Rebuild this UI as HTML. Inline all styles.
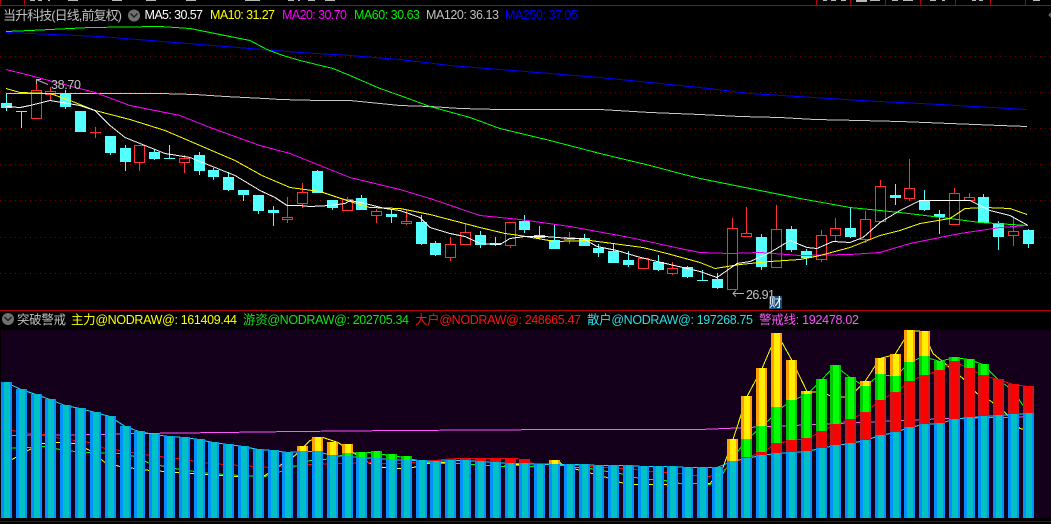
<!DOCTYPE html>
<html lang="zh">
<head>
<meta charset="utf-8">
<title>当升科技</title>
<style>
html,body{margin:0;padding:0;background:#000;width:1051px;height:524px;overflow:hidden}
svg{display:block}
text{font-family:"Liberation Sans","WenQuanYi Zen Hei","Noto Sans CJK SC",sans-serif;font-size:12.5px}
polyline{fill:none;stroke-width:1;shape-rendering:crispEdges}
</style>
</head>
<body>
<svg width="1051" height="524" viewBox="0 0 1051 524" xmlns="http://www.w3.org/2000/svg">
<defs>
<linearGradient id="b"><stop offset=".2727" stop-color="#0090ff"/><stop offset=".2727" stop-color="#00c0c4"/><stop offset=".8182" stop-color="#00c0c4"/><stop offset=".8182" stop-color="#0090ff"/></linearGradient>
<linearGradient id="r"><stop offset=".2727" stop-color="#cc1818"/><stop offset=".2727" stop-color="#ff0000"/><stop offset=".8182" stop-color="#ff0000"/><stop offset=".8182" stop-color="#cc1818"/></linearGradient>
<linearGradient id="g"><stop offset=".2727" stop-color="#00c800"/><stop offset=".2727" stop-color="#00ff00"/><stop offset=".8182" stop-color="#00ff00"/><stop offset=".8182" stop-color="#00c800"/></linearGradient>
<linearGradient id="y"><stop offset=".2727" stop-color="#ffa000"/><stop offset=".2727" stop-color="#ffee00"/><stop offset=".8182" stop-color="#ffee00"/><stop offset=".8182" stop-color="#ffa000"/></linearGradient>
</defs>
<rect width="1051" height="524" fill="#000"/>

<!-- top strip fragments -->
<g fill="#b8b8b8" shape-rendering="crispEdges">
<rect x="30" y="0" width="5" height="1"/><rect x="38" y="0" width="4" height="1"/><rect x="48" y="0" width="2" height="1"/><rect x="68" y="0" width="10" height="1"/><rect x="112" y="0" width="10" height="1"/><rect x="146" y="0" width="10" height="1"/><rect x="186" y="0" width="10" height="1"/><rect x="245" y="0" width="15" height="1"/><rect x="288" y="0" width="6" height="1"/><rect x="298" y="0" width="2" height="1"/><rect x="308" y="0" width="7" height="1"/><rect x="325" y="0" width="10" height="1"/>
<rect x="823" y="0" width="4" height="1"/><rect x="831" y="0" width="5" height="1"/><rect x="841" y="0" width="5" height="1"/><rect x="856" y="0" width="11" height="1"/><rect x="856" y="1" width="11" height="1"/><rect x="870" y="0" width="10" height="1"/><rect x="892" y="0" width="6" height="1"/><rect x="903" y="0" width="10" height="1"/><rect x="930" y="0" width="6" height="1"/><rect x="942" y="0" width="3" height="1"/><rect x="972" y="0" width="4" height="1"/><rect x="979" y="0" width="4" height="1"/><rect x="1033" y="0" width="7" height="1"/>
</g>
<g fill="#b40000" shape-rendering="crispEdges">
<rect x="0" y="5" width="1051" height="1"/>
<rect x="0" y="0" width="1" height="5"/><rect x="24" y="0" width="1" height="5"/>
<rect x="816" y="0" width="1" height="5"/><rect x="850" y="0" width="1" height="5"/><rect x="885" y="0" width="1" height="5"/><rect x="920" y="0" width="1" height="5"/><rect x="955" y="0" width="1" height="5"/><rect x="990" y="0" width="1" height="5"/><rect x="1025" y="0" width="1" height="5"/>
<rect x="0" y="310" width="1051" height="1"/>
</g>

<!-- dotted grid -->
<g stroke="#800000" stroke-width="1" stroke-dasharray="1 4" shape-rendering="crispEdges">
<path d="M0 56.5H1051M0 92.5H1051M0 128.5H1051M0 164.5H1051M0 200.5H1051M0 237.5H1051M0 273.5H1051"/>
</g>

<!-- header text -->
<text x="3" y="20" textLength="119" style="font-size:13px" fill="#c0c0c0">当升科技(日线,前复权)</text>
<circle cx="134" cy="15.5" r="6" fill="#707070"/><polyline points="130.5,13.5 134,17 137.5,13.5" stroke="#202020" style="stroke-width:1.5;shape-rendering:auto"/>
<text x="144.5" y="19" textLength="58.5" fill="#ffffff">MA5: 30.57</text>
<text x="210" y="19" textLength="65" fill="#ffff00">MA10: 31.27</text>
<text x="282" y="19" textLength="65" fill="#ff00ff">MA20: 30.70</text>
<text x="354" y="19" textLength="66" fill="#00f000">MA60: 30.63</text>
<text x="426" y="19" textLength="73" fill="#c0c0c0">MA120: 36.13</text>
<text x="505" y="19" textLength="73" fill="#0000f0">MA250: 37.05</text>
<path d="M1049 15l2-2v4z" fill="none" stroke="#707070"/>

<!-- candles: cyan -->
<path fill="#54ffff" shape-rendering="crispEdges" d="M1 103h11v5h-11zM6 93h1v18h-1zM16 111h11v1h-11zM21 111h1v17h-1zM60 93h11v14h-11zM65 90h1v19h-1zM75 111h11v21h-11zM105 136h11v17h-11zM110 136h1v19h-1zM120 148h11v14h-11zM125 145h1v26h-1zM149 152h11v7h-11zM154 149h1v11h-1zM164 158h11v1h-11zM169 145h1v14h-1zM194 155h11v16h-11zM199 152h1v23h-1zM208 170h11v7h-11zM213 168h1v12h-1zM223 177h11v13h-11zM228 172h1v19h-1zM238 190h11v5h-11zM243 190h1v11h-1zM253 195h11v16h-11zM258 195h1v19h-1zM268 210h11v3h-11zM273 206h1v20h-1zM312 171h11v22h-11zM317 170h1v2h-1zM327 200h11v8h-11zM332 200h1v10h-1zM356 198h11v12h-11zM361 195h1v4h-1zM386 214h11v3h-11zM391 209h1v14h-1zM416 222h11v22h-11zM421 215h1v30h-1zM430 243h11v12h-11zM435 241h1v15h-1zM475 235h11v10h-11zM480 231h1v17h-1zM490 243h11v2h-11zM495 237h1v9h-1zM519 221h11v9h-11zM524 215h1v18h-1zM534 235h11v3h-11zM539 226h1v13h-1zM549 240h11v9h-11zM554 225h1v24h-1zM579 238h11v8h-11zM584 234h1v12h-1zM593 248h11v5h-11zM598 244h1v13h-1zM608 251h11v12h-11zM613 243h1v20h-1zM623 260h11v5h-11zM628 251h1v16h-1zM653 262h11v8h-11zM658 255h1v16h-1zM682 267h11v10h-11zM687 266h1v12h-1zM697 280h11v1h-11zM702 270h1v11h-1zM712 279h11v9h-11zM717 273h1v16h-1zM756 237h11v30h-11zM761 234h1v36h-1zM786 229h11v21h-11zM791 226h1v26h-1zM801 251h11v7h-11zM806 249h1v16h-1zM845 228h11v9h-11zM850 207h1v31h-1zM890 195h11v3h-11zM895 184h1v21h-1zM919 200h11v10h-11zM924 190h1v21h-1zM934 214h11v3h-11zM939 210h1v24h-1zM978 197h11v26h-11zM983 194h1v29h-1zM993 223h11v14h-11zM998 221h1v29h-1zM1023 230h11v14h-11zM1028 229h1v19h-1z"/>
<!-- candles: red -->
<path fill="#000" stroke="#ff3232" stroke-width="1" shape-rendering="crispEdges" d="M31.5 90.5h10v28h-10zM36.5 82v8M45.5 91.5h10v3h-10zM50.5 87v4M50.5 95v5M90 132.5h11M95.5 127v11M134.5 145.5h10v17h-10zM139.5 163v8M179.5 158.5h10v4h-10zM184.5 155v3M184.5 163v10M282.5 217.5h10v2h-10zM287.5 197v20M287.5 220v3M297.5 192.5h10v11h-10zM302.5 183v9M302.5 204v4M342.5 199.5h10v11h-10zM347.5 197v2M371.5 211.5h10v4h-10zM376.5 209v2M376.5 216v7M401.5 221.5h10v2h-10zM406.5 210v11M406.5 224v1M445.5 244.5h10v13h-10zM450.5 237v7M450.5 258v3M460.5 232.5h10v12h-10zM465.5 224v8M505.5 222.5h10v23h-10zM510.5 246v2M564.5 237.5h10v2h-10zM569.5 232v5M569.5 240v4M638.5 258.5h10v10h-10zM667.5 268.5h10v5h-10zM672.5 262v6M672.5 274v1M727.5 228.5h10v61h-10zM732.5 218v10M741.5 233.5h10v3h-10zM746.5 207v26M771.5 229.5h10v38h-10zM776.5 205v24M816.5 235.5h10v24h-10zM821.5 230v5M821.5 260v2M830.5 228.5h10v7h-10zM835.5 218v10M835.5 236v5M860.5 219.5h10v20h-10zM865.5 211v8M865.5 240v3M875.5 186.5h10v35h-10zM880.5 180v6M904.5 188.5h10v10h-10zM909.5 159v29M909.5 199v2M949.5 193.5h10v31h-10zM954.5 188v5M964.5 197.5h10v3h-10zM969.5 193v4M1008.5 231.5h10v4h-10zM1013.5 217v14M1013.5 236v10"/>

<!-- moving averages -->
<polyline stroke="#0000ff" points="6,32.5 30,33.5 100,36.5 150,40.5 200,44.5 250,48.5 300,52.5 350,55.5 400,59.5 450,65.5 500,69.5 550,73.5 600,77.5 650,82.5 700,87.5 750,93.5 830,98.5 860,100.5 940,104.5 1027,109.5"/>
<polyline stroke="#c8c8c8" points="6,93.5 160,93.5 195,94.5 225,96.5 265,98.5 280,99.5 320,100.5 350,100.5 400,105.5 430,106.5 460,108.5 500,109.5 600,109.5 650,112.5 700,114.5 740,116.5 780,117.5 815,119.5 860,120.5 900,121.5 950,123.5 1000,125.5 1027,126.5"/>
<polyline stroke="#00ff00" points="6,31.5 30,30.5 90,27.5 160,26.5 190,28.5 210,32.5 250,40.5 267,49.5 283,55.5 300,60.5 333,68.5 350,75.5 380,88.5 400,95.5 430,106.5 470,117.5 500,128.5 550,140.5 600,153.5 650,165.5 684,174.5 700,178.5 750,188.5 800,198.5 850,207.5 900,212.5 950,218.5 980,222.5 1027,225.5"/>
<polyline stroke="#ff00ff" points="6,69.5 30,75.5 60,83.5 95,92.5 130,105.5 180,115.5 210,127.5 260,145.5 290,153.5 320,165.5 350,177.5 400,189.5 430,198.5 480,215.5 520,219.5 570,226.5 630,237.5 680,248.5 700,252.5 730,253.5 760,252.5 800,255.5 850,254.5 880,252.5 910,243.5 960,233.5 1000,227.5 1027,225.5"/>
<polyline stroke="#ffff00" points="6,88.5 20,92.5 50,93.5 70,100.5 95,110.5 130,119.5 165,130.5 200,145.5 235,160.5 262,175.5 290,187.5 320,191.5 350,201.5 370,207.5 400,208.5 430,214.5 480,227.5 505,233.5 520,235.5 555,241.5 590,240.5 613,243.5 643,247.5 667,253.5 700,262.5 715,268.5 740,264.5 770,261.5 800,259.5 820,255.5 850,247.5 880,235.5 900,230.5 920,223.5 950,218.5 965,208.5 985,207.5 1010,208.5 1027,214.5"/>
<polyline stroke="#ffffff" points="6,106.5 20,107.5 30,105.5 50,100.5 80,105.5 95,110.5 110,125.5 125,137.5 145,145.5 165,153.5 190,157.5 205,163.5 235,175.5 240,178.5 260,190.5 275,197.5 287,205.5 300,205.5 310,206.5 330,205.5 345,203.5 350,200.5 365,203.5 385,208.5 400,210.5 420,217.5 430,227.5 450,233.5 465,236.5 480,243.5 500,244.5 510,238.5 525,236.5 545,236.5 570,238.5 583,238.5 597,246.5 617,250.5 637,256.5 657,261.5 683,267.5 700,271.5 717,277.5 737,263.5 750,261.5 770,252.5 790,240.5 807,247.5 817,248.5 833,241.5 850,242.5 863,237.5 880,222.5 900,210.5 910,205.5 920,200.5 970,200.5 990,210.5 1010,215.5 1028,225.5"/>

<!-- high/low annotations -->
<path d="M36.5 84V79.5H41M37 80L48 84.5" fill="none" stroke="#b0b0b0" stroke-width="1"/>
<text x="51" y="89" textLength="30" fill="#c0c0c0">38.70</text>
<path d="M744 293.5H733M736 290.5L733 293.5L736 296.5" fill="none" stroke="#b0b0b0" stroke-width="1"/>
<text x="746" y="299" textLength="29" fill="#c0c0c0">26.91</text>
<rect x="769" y="296" width="13" height="13" fill="#0f4c78"/>
<text x="769" y="307" style="font-size:13px" fill="#ffffff">财</text>

<!-- indicator header -->
<circle cx="8" cy="319" r="6" fill="#707070"/><polyline points="4.5,317 8,320.5 11.5,317" stroke="#202020" style="stroke-width:1.5;shape-rendering:auto"/>
<text x="17" y="324" textLength="49" style="font-size:12.5px" fill="#c0c0c0">突破警戒</text>
<text x="71" y="324" textLength="166" fill="#ffff00">主力@NODRAW@: 161409.44</text>
<text x="243" y="324" textLength="166" fill="#14e614">游资@NODRAW@: 202705.34</text>
<text x="415" y="324" textLength="166" fill="#ff1414">大户@NODRAW@: 248665.47</text>
<text x="587" y="324" textLength="166" fill="#28e0e8">散户@NODRAW@: 197268.75</text>
<text x="759" y="324" textLength="100" fill="#ff54ff">警戒线: 192478.02</text>

<!-- indicator panel -->
<rect x="1" y="330" width="1050" height="188" fill="#15001c"/>
<polyline stroke="#ff54ff" points="1,435.5 100,434.5 140,433.5 221,432.5 295,431.5 399,430.5 562,429.5 700,429.5 725,428.5 770,426.5 816,424.5 860,422.5 900,420.5 950,418.5 1000,417.5 1030,416.5"/>
<polyline stroke="#ffff00" points="6,470.5 12,459.5 28,450.5 40,443.5 60,442.5 75,443.5 90,450.5 105,462.5 120,466.5 135,468.5 150,470.5 165,471.5 190,473.5 210,474.5 235,476.5 265,475.5 280,465.5 295,455.5 310,440.5 323,437.5 338,442.5 350,450.5 368,462.5 383,467.5 398,468.5 413,467.5 428,463.5 443,462.5 502,466.5 517,464.5 532,466.5 547,463.5 560,462.5 563,465.5 577,469.5 592,473.5 607,477.5 620,482.5 635,484.5 665,484.5 680,483.5 710,483.5 723,467.5 733,439.5 747,396.5 762,368.5 777,333.5 792,360.5 807,391.5 822,392.5 835,397.5 850,396.5 865,381.5 880,358.5 895,354.5 910,330.5 923,331.5 933,353.5 963,378.5 977,393.5 990,400.5 1005,412.5 1020,428.5 1028,430.5"/>
<polyline stroke="#00ff00" points="6,448.5 30,447.5 45,446.5 60,449.5 75,451.5 90,452.5 120,453.5 135,456.5 150,463.5 165,466.5 180,469.5 195,471.5 210,473.5 240,475.5 265,476.5 290,468.5 310,460.5 325,459.5 350,453.5 369,452.5 383,454.5 398,456.5 413,459.5 428,462.5 443,463.5 458,463.5 473,464.5 487,465.5 502,466.5 517,465.5 532,466.5 547,463.5 562,465.5 577,467.5 590,468.5 607,471.5 620,473.5 635,477.5 650,479.5 665,480.5 680,483.5 695,483.5 710,484.5 723,473.5 733,457.5 747,439.5 762,426.5 782,407.5 792,400.5 807,394.5 822,379.5 835,365.5 850,377.5 865,386.5 880,374.5 895,376.5 910,362.5 923,356.5 940,361.5 954,357.5 969,359.5 983,364.5 998,379.5 1013,390.5 1023,405.5"/>
<polyline stroke="#ff0000" points="12,430.5 30,433.5 45,434.5 60,438.5 90,442.5 105,448.5 120,450.5 150,455.5 170,457.5 190,460.5 210,463.5 240,465.5 270,467.5 295,465.5 310,464.5 340,463.5 350,463.5 367,462.5 383,463.5 398,463.5 413,462.5 428,461.5 443,459.5 458,458.5 517,458.5 533,463.5 547,463.5 562,464.5 577,465.5 590,466.5 607,467.5 620,468.5 635,469.5 650,471.5 665,472.5 680,473.5 695,475.5 710,476.5 723,470.5 733,462.5 747,457.5 762,452.5 777,443.5 792,440.5 807,438.5 822,431.5 835,424.5 850,419.5 865,412.5 880,400.5 895,392.5 910,381.5 923,375.5 940,370.5 954,361.5 969,368.5 983,375.5 998,379.5 1013,384.5 1028,386.5"/>
<polyline stroke="#14dcf0" points="6,382.5 21,389.5 36,394.5 50,399.5 65,405.5 80,408.5 95,412.5 110,416.5 125,426.5 139,431.5 154,434.5 169,436.5 184,437.5 199,439.5 213,442.5 228,444.5 243,446.5 258,449.5 273,450.5 287,452.5 302,451.5 317,451.5 332,455.5 347,456.5 361,457.5 376,458.5 391,459.5 406,460.5 421,460.5 435,461.5 450,460.5 465,460.5 480,461.5 495,462.5 510,463.5 524,463.5 539,464.5 554,464.5 569,464.5 584,464.5 598,465.5 613,465.5 628,465.5 643,466.5 658,466.5 672,466.5 687,467.5 702,467.5 717,467.5 732,461.5 746,458.5 761,455.5 776,453.5 791,452.5 806,451.5 821,448.5 835,445.5 850,443.5 865,440.5 880,435.5 895,432.5 909,427.5 924,424.5 939,423.5 954,419.5 969,417.5 983,416.5 998,415.5 1013,414.5 1028,413.5"/>

<!-- stacked bars: yellow -->
<g fill="url(#y)" shape-rendering="crispEdges">
<rect x="297" y="446" width="11" height="72"/><rect x="312" y="437" width="11" height="81"/><rect x="327" y="442" width="11" height="76"/><rect x="342" y="444" width="11" height="74"/><rect x="549" y="460" width="11" height="58"/>
<rect x="727" y="439" width="11" height="79"/><rect x="741" y="396" width="11" height="122"/><rect x="756" y="368" width="11" height="150"/><rect x="771" y="333" width="11" height="185"/><rect x="786" y="360" width="11" height="158"/><rect x="801" y="391" width="11" height="127"/><rect x="860" y="381" width="11" height="137"/><rect x="875" y="358" width="11" height="160"/><rect x="890" y="354" width="11" height="164"/><rect x="904" y="330" width="11" height="188"/><rect x="919" y="331" width="11" height="187"/>
</g>
<!-- green -->
<g fill="url(#g)" shape-rendering="crispEdges">
<rect x="342" y="453" width="11" height="65"/><rect x="356" y="452" width="11" height="66"/><rect x="371" y="451" width="11" height="67"/><rect x="386" y="454" width="11" height="64"/><rect x="401" y="456" width="11" height="62"/>
<rect x="741" y="439" width="11" height="79"/><rect x="756" y="426" width="11" height="92"/><rect x="771" y="407" width="11" height="111"/><rect x="786" y="400" width="11" height="118"/><rect x="801" y="394" width="11" height="124"/><rect x="816" y="379" width="11" height="139"/><rect x="830" y="365" width="11" height="153"/><rect x="845" y="377" width="11" height="141"/><rect x="860" y="386" width="11" height="132"/><rect x="875" y="374" width="11" height="144"/><rect x="890" y="376" width="11" height="142"/><rect x="904" y="362" width="11" height="156"/><rect x="919" y="356" width="11" height="162"/><rect x="934" y="361" width="11" height="157"/><rect x="949" y="357" width="11" height="161"/><rect x="964" y="359" width="11" height="159"/><rect x="978" y="364" width="11" height="154"/>
</g>
<!-- red -->
<g fill="url(#r)" shape-rendering="crispEdges">
<rect x="430" y="460" width="11" height="58"/><rect x="445" y="459" width="11" height="59"/><rect x="460" y="458" width="11" height="60"/><rect x="475" y="458" width="11" height="60"/><rect x="490" y="458" width="11" height="60"/><rect x="505" y="458" width="11" height="60"/><rect x="519" y="459" width="11" height="59"/><rect x="534" y="463" width="11" height="55"/>
<rect x="741" y="457" width="11" height="61"/><rect x="756" y="452" width="11" height="66"/><rect x="771" y="443" width="11" height="75"/><rect x="786" y="440" width="11" height="78"/><rect x="801" y="438" width="11" height="80"/><rect x="816" y="431" width="11" height="87"/><rect x="830" y="424" width="11" height="94"/><rect x="845" y="419" width="11" height="99"/><rect x="860" y="412" width="11" height="106"/><rect x="875" y="400" width="11" height="118"/><rect x="890" y="392" width="11" height="126"/><rect x="904" y="381" width="11" height="137"/><rect x="919" y="375" width="11" height="143"/><rect x="934" y="370" width="11" height="148"/><rect x="949" y="361" width="11" height="157"/><rect x="964" y="368" width="11" height="150"/><rect x="978" y="375" width="11" height="143"/><rect x="993" y="379" width="11" height="139"/><rect x="1008" y="384" width="11" height="134"/><rect x="1023" y="386" width="11" height="132"/>
</g>
<!-- blue -->
<g fill="url(#b)" shape-rendering="crispEdges">
<rect x="1" y="382" width="11" height="136"/><rect x="16" y="389" width="11" height="129"/><rect x="31" y="394" width="11" height="124"/><rect x="45" y="399" width="11" height="119"/><rect x="60" y="405" width="11" height="113"/><rect x="75" y="408" width="11" height="110"/><rect x="90" y="412" width="11" height="106"/><rect x="105" y="416" width="11" height="102"/><rect x="120" y="426" width="11" height="92"/><rect x="134" y="431" width="11" height="87"/><rect x="149" y="434" width="11" height="84"/><rect x="164" y="436" width="11" height="82"/><rect x="179" y="437" width="11" height="81"/><rect x="194" y="439" width="11" height="79"/><rect x="208" y="442" width="11" height="76"/><rect x="223" y="444" width="11" height="74"/><rect x="238" y="446" width="11" height="72"/><rect x="253" y="449" width="11" height="69"/><rect x="268" y="450" width="11" height="68"/><rect x="282" y="452" width="11" height="66"/><rect x="297" y="451" width="11" height="67"/><rect x="312" y="451" width="11" height="67"/><rect x="327" y="455" width="11" height="63"/><rect x="342" y="456" width="11" height="62"/><rect x="356" y="457" width="11" height="61"/><rect x="371" y="458" width="11" height="60"/><rect x="386" y="459" width="11" height="59"/><rect x="401" y="460" width="11" height="58"/><rect x="416" y="460" width="11" height="58"/><rect x="430" y="461" width="11" height="57"/><rect x="445" y="460" width="11" height="58"/><rect x="460" y="460" width="11" height="58"/><rect x="475" y="461" width="11" height="57"/><rect x="490" y="462" width="11" height="56"/><rect x="505" y="463" width="11" height="55"/><rect x="519" y="463" width="11" height="55"/><rect x="534" y="464" width="11" height="54"/><rect x="549" y="464" width="11" height="54"/><rect x="564" y="464" width="11" height="54"/><rect x="579" y="464" width="11" height="54"/><rect x="593" y="465" width="11" height="53"/><rect x="608" y="465" width="11" height="53"/><rect x="623" y="465" width="11" height="53"/><rect x="638" y="466" width="11" height="52"/><rect x="653" y="466" width="11" height="52"/><rect x="667" y="466" width="11" height="52"/><rect x="682" y="467" width="11" height="51"/><rect x="697" y="467" width="11" height="51"/><rect x="712" y="467" width="11" height="51"/><rect x="727" y="461" width="11" height="57"/><rect x="741" y="458" width="11" height="60"/><rect x="756" y="455" width="11" height="63"/><rect x="771" y="453" width="11" height="65"/><rect x="786" y="452" width="11" height="66"/><rect x="801" y="451" width="11" height="67"/><rect x="816" y="448" width="11" height="70"/><rect x="830" y="445" width="11" height="73"/><rect x="845" y="443" width="11" height="75"/><rect x="860" y="440" width="11" height="78"/><rect x="875" y="435" width="11" height="83"/><rect x="890" y="432" width="11" height="86"/><rect x="904" y="427" width="11" height="91"/><rect x="919" y="424" width="11" height="94"/><rect x="934" y="423" width="11" height="95"/><rect x="949" y="419" width="11" height="99"/><rect x="964" y="417" width="11" height="101"/><rect x="978" y="416" width="11" height="102"/><rect x="993" y="415" width="11" height="103"/><rect x="1008" y="414" width="11" height="104"/><rect x="1023" y="413" width="11" height="105"/>
</g>
<rect x="0" y="521" width="1051" height="1" fill="#800000" shape-rendering="crispEdges"/>
</svg>
</body>
</html>
